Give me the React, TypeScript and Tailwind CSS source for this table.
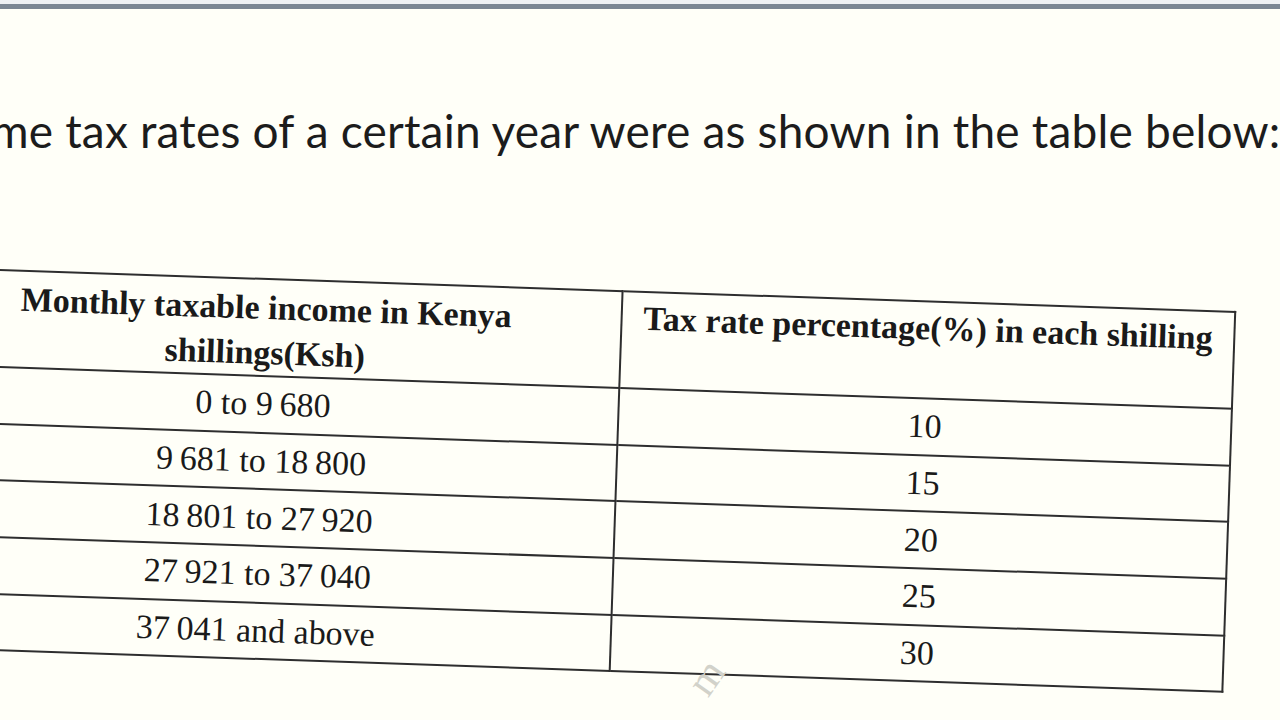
const bands = [
  { income: "0 to 9\u2009680", rate: "10" },
  { income: "9\u2009681 to 18\u2009800", rate: "15" },
  { income: "18\u2009801 to 27\u2009920", rate: "20" },
  { income: "27\u2009921 to 37\u2009040", rate: "25" },
  { income: "37\u2009041 and above", rate: "30" },
];

const TaxTable = () => {
  return (
    <div className="ml-[-89px] mt-[107px] w-[1324px] origin-top-left rotate-[1.94deg] font-['Liberation_Serif',serif] text-[#1a1a1a]">
      <table className="w-full border-collapse table-fixed">
        <colgroup>
          <col className="w-[711px]" />
          <col className="w-[613px]" />
        </colgroup>
        <thead>
          <tr className="h-[97px]">
            <th className="border-2 border-[#2e2e2e] align-top pt-[5px] text-[34px] leading-[45px] font-bold">
              Monthly taxable income in Kenya
              <br />
              shillings(Ksh)
            </th>
            <th className="border-2 border-[#2e2e2e] align-top pt-[6px] text-[34px] leading-[40px] font-bold">
              Tax rate percentage(%) in each shilling
            </th>
          </tr>
        </thead>
        <tbody>
          {bands.map((b) => (
            <tr key={b.rate} className="h-[56.7px]">
              <td className="border-2 border-[#2e2e2e] text-center text-[34px] leading-none">{b.income}</td>
              <td className="border-2 border-[#2e2e2e] text-center text-[34px] leading-none">{b.rate}</td>
            </tr>
          ))}
        </tbody>
      </table>
    </div>
  );
};

export default function App() {
  return (
    <div className="relative h-[720px] w-full overflow-hidden bg-[#fffff8]">
      {/* slide frame edge */}
      <div className="h-[4px] bg-[#eef1f4]" />
      <div className="h-[5px] bg-[#7b8794]" />

      <div className="mt-[94px] ml-[-96px] whitespace-nowrap font-['Lato',sans-serif] text-[46px] leading-[56px] tracking-[0.2px] text-[#1c1c1c]">
        Income tax rates of a certain year were as shown in the table below:
      </div>

      <TaxTable />

      {/* faint scan watermark */}
      <span className="pointer-events-none absolute left-[690px] top-[646px] -rotate-[55deg] font-['Liberation_Serif',serif] text-[42px] text-[#d2d2ca]">
        m
      </span>
    </div>
  );
}
